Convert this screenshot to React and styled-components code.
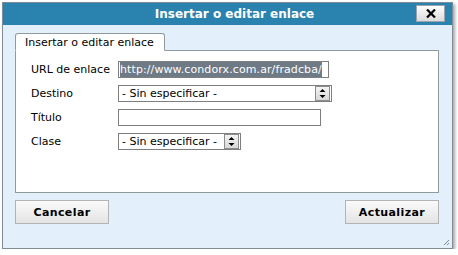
import React from "react";
import styled, { createGlobalStyle } from "styled-components";

const Global = createGlobalStyle`
  html, body { margin: 0; padding: 0; background: #fff; }
  body { font-family: "DejaVu Sans", Verdana, sans-serif; font-size: 11px; color: #000; }
`;

const Window = styled.div`
  position: relative;
  margin: 2px 0 0 2px;
  width: 449px;
  height: 245px;
  border: 1px solid #7f8d99;
  background: #e3effa;
  box-shadow: 2px 2px 3px rgba(0,0,0,0.35);
  display: flex;
  flex-direction: column;
`;

const TitleBar = styled.div`
  position: relative;
  height: 22px;
  background: #2a82ae;
  display: flex;
  align-items: center;
  justify-content: center;
  padding-left: 14px;
  color: #fff;
  font-weight: bold;
  font-size: 12px;
`;

const CloseButton = styled.div`
  position: absolute;
  right: 7px;
  top: 2px;
  width: 27px;
  height: 15px;
  border: 1px solid #9aa4ad;
  background: linear-gradient(#fdfdfd, #dcdcdc);
  display: flex;
  align-items: center;
  justify-content: center;
`;

const Body = styled.div`
  padding: 8px 13px 0 12px;
  display: flex;
  flex-direction: column;
`;

const Tabs = styled.div`
  display: flex;
  position: relative;
  z-index: 1;
  margin-bottom: -1px;
`;

const Tab = styled.div`
  height: 16px;
  padding: 0 10px 0 9px;
  border: 1px solid #919b9c;
  border-bottom: 1px solid #fff;
  border-radius: 3px 3px 0 0;
  background: #fff;
  display: flex;
  align-items: center;
  font-size: 11px;
`;

const Panel = styled.div`
  height: 131px;
  border: 1px solid #919b9c;
  background: #fff;
  padding: 10px 15px 0 15px;
`;

const Form = styled.div`
  display: grid;
  grid-template-columns: 87px auto;
  grid-auto-rows: 17px;
  row-gap: 7px;
  align-items: center;
`;

const Label = styled.div`
  font-size: 11px;
  white-space: nowrap;
`;

const TextBox = styled.div`
  width: ${p => p.w}px;
  height: 15px;
  border: 1px solid #7f7f7f;
  background: #fff;
  display: flex;
  align-items: center;
  padding: 0 1px;
  box-sizing: content-box;
`;

const Selected = styled.span`
  background: #6e7a86;
  color: #fff;
  padding: 1px 0;
  font-size: 11px;
  letter-spacing: 0.1px;
`;

const Select = styled.div`
  width: ${p => p.w}px;
  height: 15px;
  border: 1px solid #7f7f7f;
  background: #fff;
  display: flex;
  align-items: center;
  justify-content: space-between;
  padding-left: 3px;
  font-size: 11px;
`;

const Spinner = styled.div`
  width: 13px;
  height: 13px;
  margin-right: 1px;
  border: 1px solid #8c8c8c;
  background: linear-gradient(#f4f4f4, #d8d8d8);
  display: flex;
  align-items: center;
  justify-content: center;
`;

const Buttons = styled.div`
  display: flex;
  justify-content: space-between;
  margin-top: 7px;
`;

const Button = styled.div`
  width: ${p => p.w}px;
  height: 22px;
  border: 1px solid #b4b4b4;
  background: linear-gradient(#fafafa, #e4e4e4);
  display: flex;
  align-items: center;
  justify-content: center;
  font-weight: bold;
  font-size: 11px;
  letter-spacing: 0.4px;
`;

const Grip = styled.svg`
  position: absolute;
  right: 2px;
  bottom: 2px;
`;

const SpinIcon = () => (
  <svg width="7" height="9" viewBox="0 0 7 9">
    <path d="M3.5 0 L6.5 3 L0.5 3 Z M0.5 6 L6.5 6 L3.5 9 Z" fill="#000" />
  </svg>
);

export default function App() {
  return (
    <>
      <Global />
      <Window>
        <TitleBar>
          Insertar o editar enlace
          <CloseButton>
            <svg width="10" height="9" viewBox="0 0 10 9">
              <path d="M1 0.5 L9 8.5 M9 0.5 L1 8.5" stroke="#000" strokeWidth="2.2" />
            </svg>
          </CloseButton>
        </TitleBar>
        <Body>
          <Tabs>
            <Tab>Insertar o editar enlace</Tab>
          </Tabs>
          <Panel>
            <Form>
              <Label>URL de enlace</Label>
              <TextBox w={207}>
                <Selected>http://www.condorx.com.ar/fradcba/</Selected>
              </TextBox>
              <Label>Destino</Label>
              <Select w={209}>
                - Sin especificar -
                <Spinner><SpinIcon /></Spinner>
              </Select>
              <Label>Título</Label>
              <TextBox w={199} />
              <Label>Clase</Label>
              <Select w={118}>
                - Sin especificar -
                <Spinner><SpinIcon /></Spinner>
              </Select>
            </Form>
          </Panel>
          <Buttons>
            <Button w={92}>Cancelar</Button>
            <Button w={92}>Actualizar</Button>
          </Buttons>
        </Body>
        <Grip width="7" height="7" viewBox="0 0 7 7">
          <path d="M6 1 L1 6 M6 4 L4 6" stroke="#888" strokeWidth="1" />
        </Grip>
      </Window>
    </>
  );
}
